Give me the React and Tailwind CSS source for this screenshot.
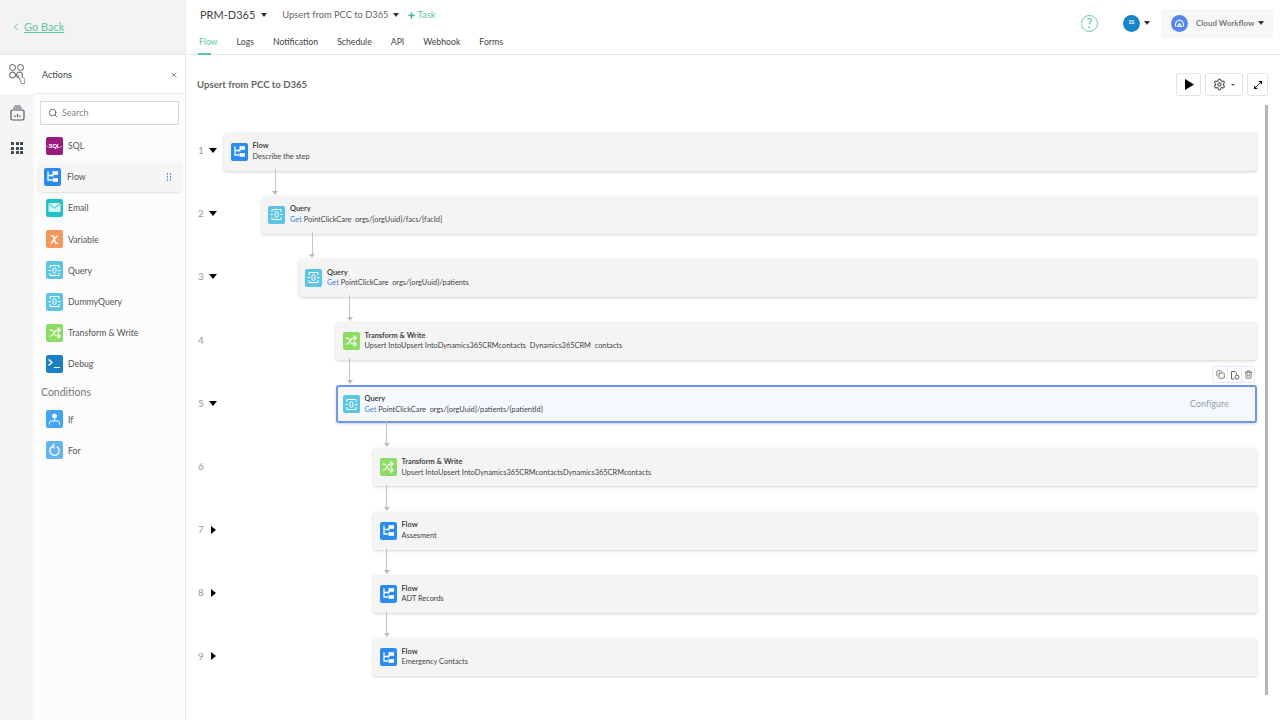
import { ChevronLeft, Copy, Plus, Search, Settings, Shuffle, Trash2, X } from "lucide-react";

const Caret = ({ className = "" }) => (
  <span className={`inline-block w-0 h-0 border-l-[3px] border-r-[3px] border-t-[4px] border-l-transparent border-r-transparent border-t-[#333] ${className}`} />
);

function Tile({ bg, children, className = "" }) {
  return (
    <div className={`w-[17px] h-[18px] rounded-[2px] shrink-0 flex items-center justify-center text-white ${bg} ${className}`}>
      {children}
    </div>
  );
}

const FlowIcon = () => (
  <Tile bg="bg-[#2a8cf0]">
    <svg width="15" height="15" viewBox="0 0 15 15" fill="none">
      <path d="M3 2.5v8.5h4M3 6.5h4" stroke="white" strokeWidth="1.3" />
      <rect x="7.5" y="2.2" width="5.5" height="3.6" fill="white" />
      <rect x="7.5" y="9.2" width="5.5" height="3.6" fill="white" />
      <rect x="6.5" y="5.5" width="2" height="2" fill="white" />
    </svg>
  </Tile>
);

const QueryIcon = () => (
  <Tile bg="bg-[#5cc5e2]">
    <svg width="15" height="15" viewBox="0 0 15 15" fill="none" stroke="white" strokeWidth="1">
      <path d="M3 5V2.5h9V5M3 10v2.5h9V10" />
      <rect x="6" y="4.6" width="3" height="5.8" rx="1.4" />
      <path d="M1.5 7.5H4M11 7.5h2.5" />
    </svg>
  </Tile>
);

const TransformIcon = () => (
  <Tile bg="bg-[#8ddc63]">
    <Shuffle size={12} strokeWidth={2.4} />
  </Tile>
);

const EmailIcon = () => (
  <Tile bg="bg-[#20c4c6]">
    <svg width="15" height="13" viewBox="0 0 15 13" fill="none">
      <rect x="1.5" y="2" width="12" height="9" fill="#d8f5f5" />
      <path d="M1.5 2.5l6 4.5 6-4.5" stroke="#20c4c6" strokeWidth="1" />
    </svg>
  </Tile>
);

const VariableIcon = () => (
  <Tile bg="bg-[#f5975a]">
    <svg width="13" height="13" viewBox="0 0 13 13" fill="none" stroke="white" strokeWidth="1.5">
      <path d="M3 3c2-1 3 0 3.5 3.5S8 11 10 10" />
      <path d="M10 3C8 3 6 7 3 10.5" />
    </svg>
  </Tile>
);

const DebugIcon = () => (
  <Tile bg="bg-[#1a7fc4]">
    <svg width="15" height="15" viewBox="0 0 15 15" fill="none" stroke="white">
      <path d="M1.5 3.5l3.5 3-3.5 3" strokeWidth="1.5" />
      <path d="M7 11.5h6" strokeWidth="1" />
    </svg>
  </Tile>
);

const IfIcon = () => (
  <Tile bg="bg-[#42a5f5]">
    <svg width="15" height="15" viewBox="0 0 15 15" fill="none" stroke="white">
      <circle cx="7.5" cy="4" r="2" fill="white" />
      <path d="M7.5 6v3M2.5 12.5V10.5q0-1.5 1.5-1.5h7q1.5 0 1.5 1.5v2" />
    </svg>
  </Tile>
);

const ForIcon = () => (
  <Tile bg="bg-[#64b5ec]">
    <svg width="15" height="15" viewBox="0 0 15 15" fill="none" stroke="white" strokeWidth="1.3">
      <path d="M5.2 3.6a4.7 4.7 0 1 0 4.6 0" />
      <path d="M7.5 1l-2 2.2 2 2.2" />
    </svg>
  </Tile>
);

const SqlIcon = () => (
  <Tile bg="bg-[#9a1b7b]">
    <span className="text-[6px] font-bold leading-none tracking-[-0.3px] font-['Liberation_Sans',sans-serif]">·SQL·</span>
  </Tile>
);

const actions = [
  { name: "SQL", icon: SqlIcon },
  { name: "Flow", icon: FlowIcon, active: true },
  { name: "Email", icon: EmailIcon },
  { name: "Variable", icon: VariableIcon },
  { name: "Query", icon: QueryIcon },
  { name: "DummyQuery", icon: QueryIcon },
  { name: "Transform & Write", icon: TransformIcon },
  { name: "Debug", icon: DebugIcon },
];

const steps = [
  { n: 1, indent: "ml-0", caret: "down", icon: FlowIcon, title: "Flow", sub: "Describe the step" },
  { n: 2, indent: "ml-[37.5px]", caret: "down", icon: QueryIcon, title: "Query", get: true, sub: "PointClickCare\u00a0 orgs/{orgUuid}/facs/{facId}", line: true },
  { n: 3, indent: "ml-[74.5px]", caret: "down", icon: QueryIcon, title: "Query", get: true, sub: "PointClickCare\u00a0 orgs/{orgUuid}/patients", line: true },
  { n: 4, indent: "ml-[112px]", icon: TransformIcon, title: "Transform & Write", sub: "Upsert IntoUpsert IntoDynamics365CRMcontacts\u00a0 Dynamics365CRM\u00a0 contacts", line: true },
  { n: 5, indent: "ml-[112px]", caret: "down", icon: QueryIcon, title: "Query", get: true, sub: "PointClickCare\u00a0 orgs/{orgUuid}/patients/{patientId}", line: true, selected: true },
  { n: 6, indent: "ml-[149px]", icon: TransformIcon, title: "Transform & Write", sub: "Upsert IntoUpsert IntoDynamics365CRMcontactsDynamics365CRMcontacts", line: true },
  { n: 7, indent: "ml-[149px]", caret: "right", icon: FlowIcon, title: "Flow", sub: "Assesment", line: true },
  { n: 8, indent: "ml-[149px]", caret: "right", icon: FlowIcon, title: "Flow", sub: "ADT Records", line: true },
  { n: 9, indent: "ml-[149px]", caret: "right", icon: FlowIcon, title: "Flow", sub: "Emergency Contacts", line: true },
];

const tabs = ["Flow", "Logs", "Notification", "Schedule", "API", "Webhook", "Forms"];

function Step({ step }) {
  const Icon = step.icon;
  return (
    <div className="flex h-[63.2px]">
      <div className="w-[38px] h-[36px] shrink-0 flex items-center pl-[12px]">
        <span className="w-[9px] text-[10px] text-[#999]">{step.n}</span>
        {step.caret === "down" && (
          <span className="ml-[2px] w-0 h-0 border-l-[4px] border-r-[4px] border-t-[5px] border-l-transparent border-r-transparent border-t-black" />
        )}
        {step.caret === "right" && (
          <span className="ml-[4px] w-0 h-0 border-t-[4px] border-b-[4px] border-l-[5px] border-t-transparent border-b-transparent border-l-black" />
        )}
      </div>
      <div
        className={`relative flex-1 h-[38px] rounded-[3px] flex items-center pr-[26px] shadow-[0_1px_3px_rgba(0,0,0,0.18)] ${step.indent} ${
          step.selected ? "bg-[#f5f8ff] border-2 border-[#6f97e8] pl-[4.5px]" : "bg-[#f4f4f4] pl-[6.5px]"
        }`}
      >
        {step.line && (
          <div className={`absolute h-[26px] w-[7px] flex flex-col items-center ${step.selected ? "left-[8px] -top-[29px]" : "left-[10px] -top-[27px]"}`}>
            <div className="w-px flex-1 bg-[#c4c4c4]" />
            <div className="w-0 h-0 border-l-[3.5px] border-r-[3.5px] border-t-[4px] border-l-transparent border-r-transparent border-t-[#bbb]" />
          </div>
        )}
        <Icon />
        <div className="ml-[5px] leading-[10px] text-[7.4px]">
          <div className="font-bold text-[#444]">{step.title}</div>
          <div className="mt-[0.5px] text-[#444] whitespace-nowrap">
            {step.get && <span className="text-[#3f7fd8]">Get </span>}
            {step.sub}
          </div>
        </div>
        {step.selected && (
          <>
            <span className="ml-auto text-[8.6px] text-[#8c9bab] tracking-[0.2px]">Configure</span>
            <div className="absolute right-0 -top-[21px] h-[17px] flex bg-white border border-[#dfe9fb] rounded-[3px] text-[#555]">
              <span className="w-[14px] flex items-center justify-center"><Copy size={9} /></span>
              <span className="w-[15px] flex items-center justify-center border-x border-[#dfe9fb]">
                <svg width="10" height="10" viewBox="0 0 10 10" fill="none" stroke="#555" strokeWidth="0.9">
                  <path d="M1.5 9V1.5h3.5l1.5 1.5v1.5" />
                  <path d="M1.5 9h3" />
                  <circle cx="7" cy="7" r="2" />
                </svg>
              </span>
              <span className="w-[12px] flex items-center justify-center"><Trash2 size={9} /></span>
            </div>
          </>
        )}
      </div>
    </div>
  );
}

export default function App() {
  return (
    <div className="relative flex h-[720px] w-[1280px] overflow-hidden bg-white font-['Lato',sans-serif] text-[#444]">
      {/* Sidebar */}
      <aside className="w-[186px] shrink-0 flex flex-col border-r border-[#e8e8e8]">
        <div className="h-[55px] shrink-0 bg-[#f3f3f3] border-b border-[#e6e6e6] flex items-center pl-[10px] text-[#62c6a2]">
          <ChevronLeft size={12} strokeWidth={2} />
          <span className="ml-[2px] text-[11px] underline">Go Back</span>
        </div>
        <div className="flex-1 flex">
          {/* Rail */}
          <div className="w-[34px] shrink-0 bg-[#f5f5f5] flex flex-col">
            <div className="h-[39px] bg-white flex items-center justify-center">
              <svg width="16" height="21" viewBox="0 0 16 21" fill="none" stroke="#555" strokeWidth="1">
                <circle cx="3.5" cy="3.5" r="3" />
                <circle cx="11.5" cy="3.5" r="3" />
                <circle cx="3.5" cy="11" r="3" />
                <circle cx="10.5" cy="11" r="3" />
                <path d="M9 11l3.5 8.5h3l.5-4.5-3-2" fill="white" stroke="#888" />
              </svg>
            </div>
            <div className="h-[38px] flex items-center justify-center">
              <svg width="15" height="16" viewBox="0 0 15 16" fill="none" stroke="#556" strokeWidth="1.2">
                <rect x="1" y="5" width="13" height="10" rx="1.5" />
                <path d="M3 3h9M4.5 1h6" />
                <path d="M7.5 12V9M5 12v-1.5M10 12v-1.5" />
              </svg>
            </div>
            <div className="h-[32px] grid grid-cols-3 gap-[1.5px] w-[12px] mx-auto content-center">
              {[1, 2, 3, 4, 5, 6, 7, 8, 9].map((i) => (
                <span key={i} className="w-[3px] h-[3px] bg-[#3c4654] rounded-[0.5px]" />
              ))}
            </div>
          </div>
          {/* Actions panel */}
          <div className="flex-1 bg-[#fcfcfc]">
            <div className="h-[39px] bg-white border-b border-[#e8e8e8] flex items-center justify-between pl-[8px] pr-[7px] pt-[2px]">
              <span className="text-[9px] text-[#444]">Actions</span>
              <X size={8} className="text-[#555]" />
            </div>
            <div className="pl-[6px] pr-[6px] pt-[7px]">
              <div className="h-[24px] border border-[#d8d8d8] bg-white rounded-[1px] flex items-center pl-[7px] text-[#888]">
                <Search size={10} className="text-[#555]" />
                <span className="ml-[4px] text-[9px]">Search</span>
              </div>
            </div>
            <div className="mt-[5px] px-[4px]">
              {actions.map((a) => {
                const Icon = a.icon;
                return (
                  <div
                    key={a.name}
                    className={`h-[31.2px] flex items-center text-[8.7px] ${
                      a.active ? "rounded-[3px] bg-[#f5f5f5] shadow-[0_1px_2px_rgba(0,0,0,0.12)] pl-[6px]" : "pl-[8px]"
                    }`}
                  >
                    <Icon />
                    <span className={`text-[#555] ${a.active ? "ml-[6px]" : "ml-[5px]"}`}>{a.name}</span>
                    {a.active && (
                      <span className="ml-auto mr-[10px] grid grid-cols-2 gap-[1.5px]">
                        {[1, 2, 3, 4, 5, 6].map((i) => (
                          <span key={i} className="w-[1.5px] h-[1.5px] bg-[#5a8fe8]" />
                        ))}
                      </span>
                    )}
                  </div>
                );
              })}
              <div className="h-[24px] pt-[3px] flex items-center pl-[3px] text-[10.5px] text-[#777]">Conditions</div>
              {[
                { name: "If", icon: IfIcon },
                { name: "For", icon: ForIcon },
              ].map((a) => (
                <div key={a.name} className="h-[31.2px] flex items-center pl-[8px] text-[8.7px]">
                  <a.icon />
                  <span className="ml-[5px] text-[#555]">{a.name}</span>
                </div>
              ))}
            </div>
          </div>
        </div>
      </aside>

      {/* Main */}
      <main className="flex-1 flex flex-col min-w-0">
        <header className="h-[55px] shrink-0 border-b border-[#e8e8e8] flex justify-between pl-[12px] pr-[7px]">
          <div>
            <div className="flex items-center h-[30px] pl-[2px]">
              <span className="text-[11px] text-[#444]">PRM-D365</span>
              <Caret className="ml-[6px]" />
              <span className="ml-[15px] text-[9.3px] text-[#666]">Upsert from PCC to D365</span>
              <Caret className="ml-[5px]" />
              <Plus size={9} strokeWidth={4} className="ml-[8px] text-[#45bd7e]" />
              <span className="ml-[1px] text-[9.5px] text-[#62c6a2]">Task</span>
            </div>
            <nav className="flex gap-[19px] mt-[4px] pl-px">
              {tabs.map((t, i) => (
                <div key={t} className={`h-[21px] flex flex-col pt-[1px] text-[8.7px] ${i === 0 ? "text-[#62c6a2]" : "text-[#444]"}`}>
                  {t}
                  {i === 0 && <span className="mt-auto -ml-px w-[13px] h-[2px] bg-[#62c6a2]" />}
                </div>
              ))}
            </nav>
          </div>
          <div className="flex items-center h-[46px]">
            <div className="w-[17px] h-[17px] rounded-full border-[1.5px] border-[#62d0a8] flex items-center justify-center text-[#4fc89c] text-[13px] leading-none">?</div>
            <div className="ml-[25px] w-[17px] h-[17px] rounded-full bg-[#1a84c8] flex items-center justify-center text-white text-[5px] font-bold">SS</div>
            <Caret className="ml-[4px]" />
            <div className="ml-[11px] h-[29px] w-[112px] bg-[#f7f7f7] rounded-[3px] flex items-center pl-[10px]">
              <div className="w-[17px] h-[17px] rounded-full bg-[#5585f0] flex items-center justify-center">
                <svg width="11" height="11" viewBox="0 0 11 11" fill="none" stroke="white" strokeWidth="1.1">
                  <path d="M2 8.5c-1.5-2 0-6 3.5-6.5 3.5.5 5 4.5 3.5 6.5" />
                  <path d="M3.5 8.5l2-3 2 3z" />
                </svg>
              </div>
              <span className="ml-[8px] text-[8px] font-bold text-[#777]">Cloud Workflow</span>
              <Caret className="ml-[4px]" />
            </div>
          </div>
        </header>

        <div className="flex-1">
          <div className="h-[77.5px] flex items-start justify-between pl-[11px] pr-[12px] pt-[18px]">
            <h1 className="mt-[5px] text-[9.6px] font-bold text-[#666]">Upsert from PCC to D365</h1>
            <div className="flex gap-[4px] h-[23px]">
              <button className="w-[25px] border border-[#e4e4e4] rounded-[2px] flex items-center justify-center">
                <svg width="10" height="11" viewBox="0 0 10 11"><path d="M1 0l9 5.5L1 11z" fill="black" /></svg>
              </button>
              <button className="w-[38px] border border-[#e4e4e4] rounded-[2px] flex items-center justify-center gap-[5px]">
                <Settings size={13} className="text-[#555]" />
                <span className="w-0 h-0 border-l-[2px] border-r-[2px] border-t-[2.5px] border-l-transparent border-r-transparent border-t-[#555]" />
              </button>
              <button className="w-[21px] border border-[#e4e4e4] rounded-[2px] flex items-center justify-center">
                <svg width="8" height="8" viewBox="0 0 10 10" fill="black">
                  <path d="M5.5 0H10v4.5zM0 5.5V10h4.5z" />
                  <path d="M2.5 7.5l5-5" stroke="black" strokeWidth="1" />
                </svg>
              </button>
            </div>
          </div>
          <div className="pr-[23px]">
            {steps.map((s) => (
              <Step key={s.n} step={s} />
            ))}
          </div>
        </div>
      </main>

      {/* Scrollbar */}
      <div className="absolute left-[1265px] top-[105px] h-[590px] w-[3px] bg-[#b5b5b5]" />
    </div>
  );
}
